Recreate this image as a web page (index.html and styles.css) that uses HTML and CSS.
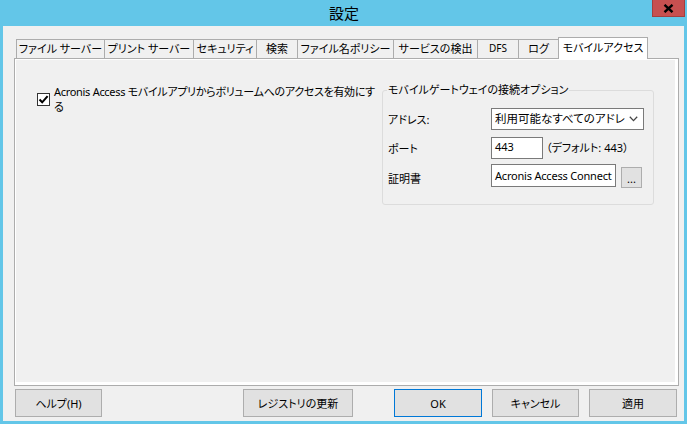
FILE: index.html
```html
<!DOCTYPE html>
<html lang="ja">
<head>
    <meta charset="UTF-8">
    <title>設定</title>
    <link rel="stylesheet" href="styles.css">
</head>
<body>
    <div class="window">
        <div class="titlebar">
            <span class="title">設定</span>
            <div class="close-button">
                <svg width="11" height="9" viewBox="0 0 11 9">
                    <path d="M1.5 0.8 L9.5 8.2 M9.5 0.8 L1.5 8.2" stroke="#000" stroke-width="2.4" fill="none"/>
                </svg>
            </div>
        </div>

        <div class="dialog">
            <div class="tabs">
                <div class="tab tab-file">ファイル サーバー</div>
                <div class="tab tab-print">プリント サーバー</div>
                <div class="tab tab-security">セキュリティ</div>
                <div class="tab tab-search">検索</div>
                <div class="tab tab-policy">ファイル名ポリシー</div>
                <div class="tab tab-discovery">サービスの検出</div>
                <div class="tab tab-dfs">DFS</div>
                <div class="tab tab-log">ログ</div>
                <div class="tab tab-mobile active">モバイルアクセス</div>
            </div>

            <div class="panel">
                <div class="panel-inner">
                    <label class="check-row">
                        <span class="checkbox">
                            <svg width="11" height="11" viewBox="0 0 11 11">
                                <path d="M1.5 5.5 L4.2 8.3 L9.6 2.2" stroke="#000" stroke-width="2" fill="none"/>
                            </svg>
                        </span>
                        <span class="check-text">Acronis Access モバイルアプリからボリュームへのアクセスを有効にす<br>る</span>
                    </label>

                    <fieldset class="group">
                        <legend>モバイルゲートウェイの接続オプション</legend>
                        <div class="form-grid">
                            <span class="field-label">アドレス:</span>
                            <div class="select">
                                <span class="select-text">利用可能なすべてのアドレス</span>
                                <svg class="select-arrow" width="9" height="6" viewBox="0 0 9 6">
                                    <path d="M0.8 0.8 L4.5 4.6 L8.2 0.8" stroke="#444" stroke-width="1.3" fill="none"/>
                                </svg>
                            </div>

                            <span class="field-label">ポート</span>
                            <div class="field-row">
                                <span class="textbox textbox-port">443</span>
                                <span class="hint">（デフォルト: 443）</span>
                            </div>

                            <span class="field-label">証明書</span>
                            <div class="field-row">
                                <span class="textbox textbox-cert">Acronis Access Connect</span>
                                <span class="browse-button">...</span>
                            </div>
                        </div>
                    </fieldset>
                </div>
            </div>

            <div class="buttons">
                <div class="button btn-help">ヘルプ(H)</div>
                <div class="button btn-registry">レジストリの更新</div>
                <div class="button btn-ok">OK</div>
                <div class="button btn-cancel">キャンセル</div>
                <div class="button btn-apply">適用</div>
            </div>
        </div>
    </div>
</body>
</html>
```

FILE: styles.css
```css
* {
    margin: 0;
    padding: 0;
    box-sizing: border-box;
}

body {
    font-family: 'Noto Sans', 'Noto Sans CJK JP', sans-serif;
    font-size: 11px;
    color: #000;
    background: #63c6e8;
    overflow: hidden;
    font-feature-settings: "palt";
}

.window {
    width: 687px;
    height: 424px;
    background: #63c6e8;
    display: flex;
    flex-direction: column;
}

/* タイトルバー */
.titlebar {
    height: 26px;
    position: relative;
    display: flex;
    align-items: center;
    justify-content: center;
}

.title {
    font-family: 'Noto Sans CJK JP', sans-serif;
    font-size: 15px;
    line-height: 18px;
    padding-left: 1px;
    margin-top: -1px;
}

.close-button {
    position: absolute;
    top: 0;
    right: 2px;
    width: 33px;
    height: 17px;
    background: #c75050;
    border: 1px solid #a33f3f;
    border-top: none;
    display: flex;
    align-items: center;
    justify-content: center;
}

/* ダイアログ本体 */
.dialog {
    flex: 1;
    margin: 0 3px 3px 3px;
    background: #f0f0f0;
    padding: 11px 5px 4px 11px;
    display: flex;
    flex-direction: column;
}

.tabs {
    height: 21px;
    display: flex;
    align-items: flex-end;
    padding-left: 2px;
    position: relative;
    z-index: 1;
}

.tab {
    height: 19px;
    border: 1px solid #acacac;
    border-bottom: none;
    margin-left: -1px;
    background: #f0f0f0;
    text-align: center;
    line-height: 17px;
    white-space: nowrap;
    overflow: hidden;
}

.tab:first-child {
    margin-left: 0;
}

.tab.active {
    height: 22px;
    margin-bottom: -1px;
    background: #fff;
    line-height: 19px;
}

.tab-file { width: 89px; }
.tab-print { width: 90px; }
.tab-security { width: 64px; }
.tab-search { width: 42px; }
.tab-policy { width: 97px; }
.tab-discovery { width: 85px; }
.tab-dfs { width: 42px; font-size: 10px; }
.tab-log { width: 41px; }
.tab-mobile { width: 90px; }

.panel {
    height: 328px;
    border: 1px solid #acacac;
    background: #fff;
    padding: 1px 3px 3px 1px;
    display: flex;
}

.panel-inner {
    flex: 1;
    background: #f0f0f0;
    display: flex;
    align-items: flex-start;
    padding: 24px 0 0 21px;
}

/* チェックボックス */
.check-row {
    display: flex;
    align-items: center;
    gap: 4px;
    width: 345px;
}

.checkbox {
    width: 13px;
    height: 13px;
    border: 1px solid #333;
    background: #fff;
    display: flex;
    align-items: center;
    justify-content: center;
    flex-shrink: 0;
}

.check-text {
    font-size: 11px;
    letter-spacing: -0.3px;
    line-height: 15px;
    white-space: nowrap;
}

/* グループボックス */
.group {
    width: 272px;
    height: 122px;
    margin: -1px 0 0 0;
    padding: 0 4px;
    border: 1px solid #dcdcdc;
    border-radius: 3px;
}

.group legend {
    padding: 0 1px;
    line-height: 14px;
}

.form-grid {
    display: grid;
    grid-template-columns: 104px auto;
    grid-template-rows: 22px 22px 24px;
    row-gap: 7px;
    margin-top: 11px;
}

.field-label {
    padding-left: 1px;
    display: flex;
    align-items: center;
}

.field-row {
    display: flex;
    align-items: flex-start;
}

.select {
    width: 153px;
    height: 22px;
    border: 1px solid #7a7a7a;
    background: #fff;
    display: flex;
    align-items: center;
    padding: 0 5px 0 3px;
    overflow: hidden;
}

.select-text {
    flex: 1;
    white-space: nowrap;
    overflow: hidden;
    line-height: 16px;
    font-size: 11.5px;
}

.select-arrow {
    margin-left: 4px;
    flex-shrink: 0;
}

.textbox {
    height: 22px;
    border: 1px solid #7a7a7a;
    background: #fff;
    padding: 1px 3px 0 3px;
    line-height: 16px;
    white-space: nowrap;
    overflow: hidden;
}

.textbox-port {
    width: 52px;
}

.hint {
    margin-left: 3px;
    line-height: 22px;
}

.textbox-cert {
    width: 125px;
    height: 23px;
    margin-top: -2px;
    padding-top: 3px;
    font-size: 11px;
    letter-spacing: -0.2px;
}

.browse-button {
    width: 21px;
    height: 21px;
    margin: 1px 0 0 5px;
    border: 1px solid #adadad;
    background: #e1e1e1;
    text-align: center;
    line-height: 22px;
}

/* 下部ボタン */
.buttons {
    display: flex;
    margin-top: 3px;
    padding-left: 1px;
}

.button {
    height: 28px;
    border: 1px solid #adadad;
    background: #e1e1e1;
    display: flex;
    align-items: center;
    justify-content: center;
}

.btn-help { width: 87px; }
.btn-registry { width: 110px; margin-left: 141px; }
.btn-ok { width: 88px; margin-left: 41px; border-color: #0078d7; }
.btn-cancel { width: 87px; margin-left: 10px; }
.btn-apply { width: 88px; margin-left: 10px; }
```
